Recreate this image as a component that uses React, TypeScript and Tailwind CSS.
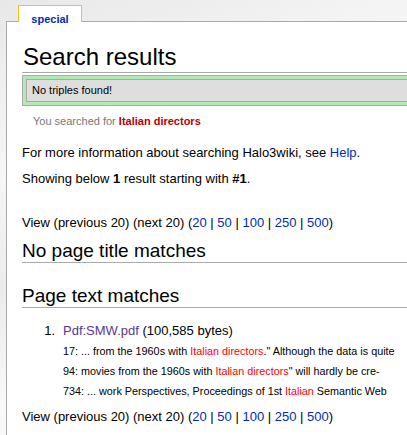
import React from "react";

const blue = "text-[#002bb8]";

function ViewLine() {
  const sizes = ["20", "50", "100", "250", "500"];
  return (
    <div className="text-[13px] leading-[20px] whitespace-nowrap">
      View (previous 20) (next 20) (
      {sizes.map((s, i) => (
        <span key={s}>
          <a className={blue}>{s}</a>
          {i < sizes.length - 1 ? " | " : ""}
        </span>
      ))}
      )
    </div>
  );
}

const snippets: React.ReactNode[] = [
  <>
    17: ... from the 1960s with <span className="text-[#ff0000]">Italian directors</span>." Although the data is quite
  </>,
  <>
    94: movies from the 1960s with <span className="text-[#ff0000]">Italian directors</span>" will hardly be cre-
  </>,
  <>
    734: ... work Perspectives, Proceedings of 1st <span className="text-[#ff0000]">Italian</span> Semantic Web
  </>,
];

export default function App() {
  return (
    <div
      className="w-[407px] h-[435px] overflow-hidden text-black bg-[linear-gradient(160deg,#e8e8e8_0%,#f6f6f6_30%,#ebebeb_50%,#f9f9f9_70%,#eeeeee_100%)] pt-[5px]"
      style={{ fontFamily: '"Liberation Sans", Arial, sans-serif' }}
    >
      <div className="relative z-10 -mb-px ml-[18px] w-[64px] h-[17px] border-t border-l border-r border-[#fabd23] bg-white text-center">
        <span className="text-[11px] font-bold leading-[16px] text-[#002bb8]">special</span>
      </div>

      <div className="ml-[6px] h-[420px] border-t border-l border-[#aaaaaa] bg-white pl-[15px]">
        <h1 className="mt-[21px] pb-px text-[24px] leading-[28px] border-b border-[#aaaaaa] pl-px">Search results</h1>

        <div className="mt-[2px] border border-r-0 border-[#aaaaaa] bg-[#b2e9b2] py-[3px] pl-[3px]">
          <div className="h-[23px] border border-r-0 border-[#aaaaaa] bg-[#dedede] pl-[5px] text-[11px] leading-[21px]">
            No triples found!
          </div>
        </div>

        <div className="mt-[8px] pl-[11px] text-[11px] leading-[14px] text-[#777777]">
          You searched for <b className="text-[#ba0000]">Italian directors</b>
        </div>

        <p className="mt-[15px] text-[13px] leading-[20px]">
          For more information about searching Halo3wiki, see <a className={blue}>Help</a>.
        </p>
        <p className="mt-[6px] text-[13px] leading-[20px]">
          Showing below <b>1</b> result starting with <b>#1</b>.
        </p>

        <div className="mt-[24px]">
          <ViewLine />
        </div>

        <h2 className="mt-[6px] text-[19px] leading-[23px] border-b border-[#aaaaaa]">No page title matches</h2>
        <h2 className="mt-[21px] text-[19px] leading-[23px] border-b border-[#aaaaaa]">Page text matches</h2>

        <div className="mt-[13px]">
          <div className="flex text-[13px] leading-[20px]">
            <span className="w-[41px] pr-[8px] text-right">1.</span>
            <span>
              <a className="text-[#5a3696]">Pdf:SMW.pdf</a> (100,585 bytes)
            </span>
          </div>
          {snippets.map((s, i) => (
            <div key={i} className="pl-[41px] text-[10.8px] leading-[20px] whitespace-nowrap">
              {s}
            </div>
          ))}
        </div>

        <div className="mt-[6px]">
          <ViewLine />
        </div>
      </div>
    </div>
  );
}
